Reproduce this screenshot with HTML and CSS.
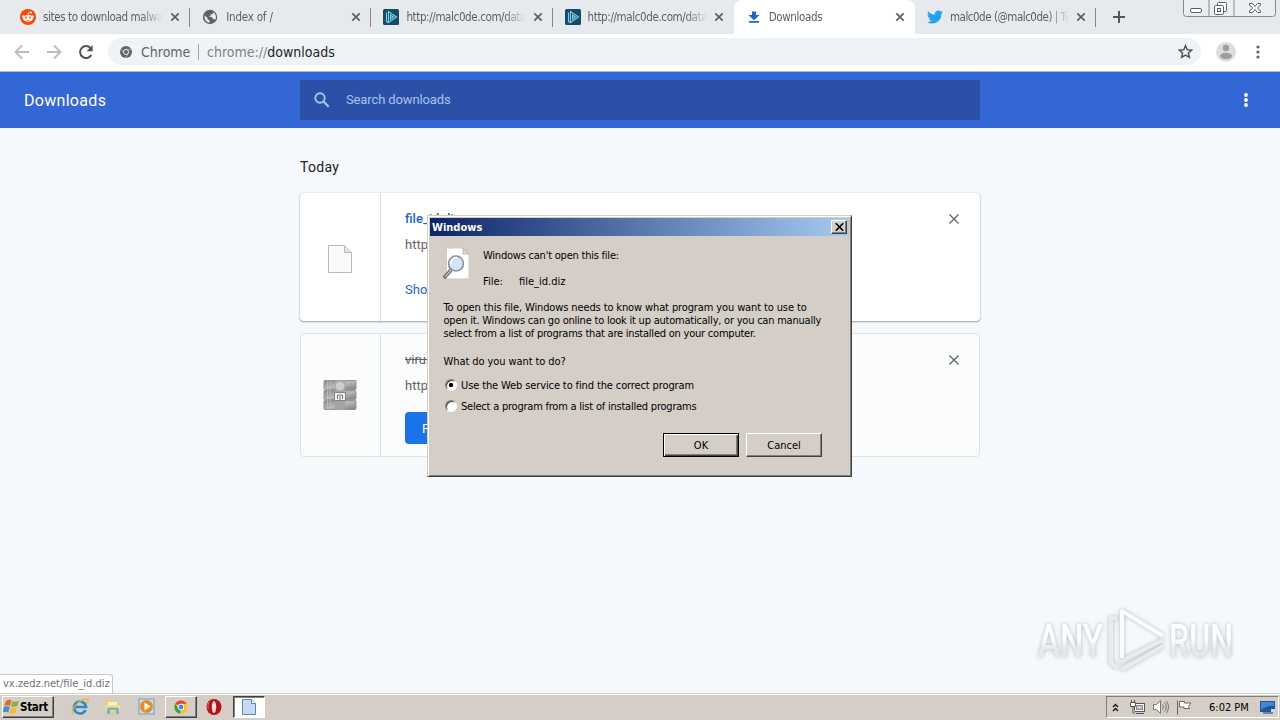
FILE: index.html
```
<!DOCTYPE html>
<html lang="en">
<head>
    <meta charset="UTF-8">
    <meta name="viewport" content="width=device-width, initial-scale=1.0">
    <title>Downloads</title>
    <link rel="stylesheet" href="styles.css">
</head>
<body>

<!-- Shared shapes -->
<svg class="defs" width="0" height="0">
    <defs>
        <symbol id="cross" viewBox="0 0 10 10"><path d="M1.300 1.300l7.400 7.400M8.700 1.300l-7.400 7.400" fill="none" stroke="currentColor" stroke-width="1.700"/></symbol>
        <symbol id="thin-cross" viewBox="0 0 12 12"><path d="M1.500 1.500l9 9M10.500 1.500l-9 9" fill="none" stroke="currentColor" stroke-width="1.300"/></symbol>
        <symbol id="malcode" viewBox="0 0 16 16">
            <rect width="16" height="16" rx="1.500" fill="#144b6b"/>
            <path d="M3.500 3.500v9l2 1.500M5.500 2.500v11l8-5.500zM7.500 6v4l3-2z" fill="none" stroke="#7fd0e8" stroke-width="1.100"/>
        </symbol>
    </defs>
</svg>

<!-- Tabs -->
<div class="tabs">
    <div class="tab">
        <svg class="favicon" viewBox="0 0 16 16"><circle cx="8" cy="8" r="8" fill="#ff4500"/><ellipse cx="8" cy="9.300" rx="5" ry="3.500" fill="#fff"/><circle cx="3.300" cy="7.500" r="1.300" fill="#fff"/><circle cx="12.700" cy="7.500" r="1.300" fill="#fff"/><circle cx="11" cy="3.500" r="1" fill="#fff"/><path d="M8 6l.7-2.800 2.300.4" fill="none" stroke="#fff" stroke-width=".7"/><circle cx="6" cy="8.500" r="1" fill="#ff4500"/><circle cx="10" cy="8.500" r="1" fill="#ff4500"/><path d="M6 11q2 1.200 4 0" fill="none" stroke="#ff4500" stroke-width=".7"/></svg>
        <span class="tab-title">sites to download malware</span>
        <svg class="tab-close"><use href="#cross"/></svg>
    </div>
    <div class="tab">
        <svg class="favicon" viewBox="0 0 16 16"><circle cx="8" cy="8" r="7.200" fill="#5f6368"/><path d="M2.300 6.500l3 2.200.5 1.800 1.700.8v2.400Q2.500 13 2.300 6.500zM8 2.200l3.500 1.100-.8 1.600-2 .5-.3 1.600-1.700.5 2.900.6 1.500 1.800 2.500.5Q15 6 11.500 3.300z" fill="#e7eaed"/></svg>
        <span class="tab-title loose">Index of /</span>
        <svg class="tab-close"><use href="#cross"/></svg>
    </div>
    <div class="tab">
        <svg class="favicon"><use href="#malcode"/></svg>
        <span class="tab-title">http://malc0de.com/database</span>
        <svg class="tab-close"><use href="#cross"/></svg>
    </div>
    <div class="tab before-active">
        <svg class="favicon"><use href="#malcode"/></svg>
        <span class="tab-title">http://malc0de.com/database</span>
        <svg class="tab-close"><use href="#cross"/></svg>
    </div>
    <div class="tab active">
        <svg class="favicon" viewBox="0 0 16 16"><path d="M6 2.500h4V6H13.500L8 11.300 2.500 6h3.500zM3 12h10v1.700H3z" fill="#1967d2"/></svg>
        <span class="tab-title">Downloads</span>
        <svg class="tab-close"><use href="#cross"/></svg>
    </div>
    <div class="tab">
        <svg class="favicon" viewBox="0 0 24 24"><path d="M24 4.600a10 10 0 0 1-2.800.8 5 5 0 0 0 2.200-2.700 10 10 0 0 1-3.100 1.200A4.900 4.900 0 0 0 11.900 8.400 14 14 0 0 1 1.700 3.200a4.900 4.900 0 0 0 1.500 6.500 5 5 0 0 1-2.200-.6 4.900 4.900 0 0 0 3.900 4.900 5 5 0 0 1-2.200.1 4.900 4.900 0 0 0 4.600 3.400A10 10 0 0 1 0 19.500a14 14 0 0 0 21.500-12.400A10 10 0 0 0 24 4.600z" fill="#1da1f2"/></svg>
        <span class="tab-title tight">malc0de (@malc0de) | Twitter</span>
        <svg class="tab-close"><use href="#cross"/></svg>
    </div>
    <svg class="new-tab" viewBox="0 0 12 12"><path d="M6 0v12M0 6h12" stroke="#50555a" stroke-width="2"/></svg>
    <svg class="window-buttons" viewBox="0 0 94 18">
        <path d="M.5 0v13.500q0 3 3 3h86q3 0 3-3V0M26 0v16M51 0v16" fill="#eceff1" stroke="#85898d"/>
        <g fill="#fff" stroke="#5b6065"><rect x="7.500" y="8.500" width="11" height="4" rx="1.500"/><rect x="34.500" y="2.500" width="9" height="9" rx="1"/><rect x="31.500" y="5.500" width="9" height="9" rx="1"/><rect x="34.500" y="8.500" width="3" height="3"/><path d="M66.500 3.500h3l2.500 3 2.500-3h3v1.500l-3 3 3 3v1.500h-3l-2.500-3-2.500 3h-3v-1.500l3-3-3-3z"/></g>
    </svg>
</div>

<!-- Address bar -->
<div class="toolbar">
    <svg class="nav-icon" viewBox="0 0 16 16"><path d="M15 8H2M8 1.500L1.500 8 8 14.500" fill="none" stroke="#babcbe" stroke-width="1.800"/></svg>
    <svg class="nav-icon" viewBox="0 0 16 16"><path d="M1 8h13M8 1.500L14.500 8 8 14.500" fill="none" stroke="#babcbe" stroke-width="1.800"/></svg>
    <svg class="nav-icon" viewBox="0 0 16 16"><path d="M13.300 11A6 6 0 1 1 12.500 4" fill="none" stroke="#50555a" stroke-width="2"/><path d="M14.700 1v6.200H8.500z" fill="#50555a"/></svg>
    <div class="omnibox">
        <svg class="chrome-mark" viewBox="0 0 12 12"><circle cx="6" cy="6" r="6" fill="#5f6368"/><circle cx="6" cy="6" r="2.500" fill="#5f6368" stroke="#f1f3f4"/><path d="M6 3.300h5.500M3.700 7.300L1 2.800M8.300 7.300L5.700 12" stroke="#c9cccf" stroke-width=".7"/></svg>
        <span class="origin">Chrome</span>
        <span class="divider"></span>
        <span class="url"><span class="scheme">chrome://</span><span class="host">downloads</span></span>
        <svg class="star" viewBox="0 0 16 16"><path d="M8 1.800l1.900 4.300 4.700.4-3.500 3.100 1 4.600L8 11.800l-4.100 2.400 1-4.600L1.400 6.500l4.700-.4z" fill="none" stroke="#50555a" stroke-width="1.600"/></svg>
    </div>
    <svg class="avatar" viewBox="0 0 20 20"><circle cx="10" cy="10" r="10" fill="#dcdddf"/><circle cx="10" cy="6" r="3.200" fill="#9c9ea1"/><ellipse cx="10" cy="14" rx="6" ry="3.200" fill="#9c9ea1"/></svg>
    <svg class="menu-dots" viewBox="0 0 4 14"><g fill="#5f6368"><circle cx="2" cy="2" r="1.600"/><circle cx="2" cy="7" r="1.600"/><circle cx="2" cy="12" r="1.600"/></g></svg>
</div>

<header class="page-header">
    <h1>Downloads</h1>
    <div class="search">
        <svg viewBox="0 0 16 16"><circle cx="6" cy="6" r="4.700" fill="none" stroke="#a9c2ef" stroke-width="1.900"/><path d="M9.500 9.500l5.200 5.200" stroke="#a9c2ef" stroke-width="2.200"/></svg>
        <span>Search downloads</span>
    </div>
    <svg class="menu-dots" viewBox="0 0 4 14"><g fill="#fff"><circle cx="2" cy="2" r="1.900"/><circle cx="2" cy="7" r="1.900"/><circle cx="2" cy="12" r="1.900"/></g></svg>
</header>

<main>
    <h2>Today</h2>
    <div class="card">
        <div class="file-icon">
            <svg width="26" height="30" viewBox="0 0 26 30"><path d="M1.500 1.500h16l7 7v20h-23z" fill="#fafafa" stroke="#b9b9b9"/><path d="M17.500 1.500v7h7" fill="#e4e4e4" stroke="#b9b9b9"/></svg>
        </div>
        <div class="details">
            <a class="file-name">file_id.diz</a>
            <span class="file-url">http://vx.zedz.net/file_id.diz</span>
            <a class="show">Show in folder</a>
        </div>
        <svg class="remove"><use href="#thin-cross"/></svg>
    </div>
    <div class="card muted">
        <div class="file-icon">
            <svg width="34" height="32" viewBox="0 0 34 32">
                <defs><linearGradient id="book" x2="1" y2="1"><stop stop-color="#888"/><stop offset=".5" stop-color="#b8b8b8"/><stop offset="1" stop-color="#7d7d7d"/></linearGradient></defs>
                <g fill="url(#book)" stroke="#959595"><rect x="1" y="1.500" width="32" height="9" rx="1"/><rect x="1" y="11.500" width="32" height="9" rx="1"/><rect x="1" y="21.500" width="32" height="9" rx="1"/></g>
                <path d="M4.500 2v28M7 2v28" stroke="#c4c4c4" stroke-width=".7"/><rect x="12" y="1" width="10" height="30" fill="#a4a4a4"/><circle cx="17" cy="7" r="4.500" fill="#ccc"/><rect x="11.500" y="13.500" width="11" height="8" fill="#f2f2f2" stroke="#858585"/><path d="M14.500 20v-4h5v4M17 17v4" fill="none" stroke="#777"/>
            </svg>
        </div>
        <div class="details">
            <span class="file-name removed">virus.zip</span>
            <span class="file-url">http://vx.zedz.net/virus.zip</span>
            <button class="retry">Retry</button>
        </div>
        <svg class="remove"><use href="#thin-cross"/></svg>
    </div>
</main>

<!-- Link status bubble -->
<div class="status">vx.zedz.net/file_id.diz</div>

<!-- Watermark -->
<svg class="watermark" viewBox="0 0 210 74">
    <defs><linearGradient id="fade" x2="0" y2="1"><stop offset=".45" stop-color="#fff"/><stop offset=".65" stop-color="#e6e8ea"/></linearGradient></defs>
    <g class="mark-text">
        <text x="6" y="53" textLength="65" lengthAdjust="spacingAndGlyphs">ANY</text>
        <text x="137" y="53" textLength="64" lengthAdjust="spacingAndGlyphs">RUN</text>
    </g>
    <g class="mark-logo"><path class="lower" d="M85 14h-6v45l7 5M88 58l43-22M89 66l42-24"/><path d="M90 54V7l41 25"/></g>
</svg>

<!-- File association dialog -->
<div class="dialog">
    <div class="titlebar">
        <span>Windows</span>
        <button class="dialog-close"><svg width="9" height="8" viewBox="0 0 9 8"><path d="M.8.300l7.400 7.400M8.200.300L.8 7.700" stroke="#000" stroke-width="1.600"/></svg></button>
    </div>
    <div class="dialog-body">
        <div class="summary">
            <svg width="30" height="34" viewBox="0 0 30 34"><path d="M4.500 1h16.500l6 6v25H4.500z" fill="#fff" stroke="#cfcac3"/><path d="M21 1v6h6z" fill="#d9d9d9" stroke="#aaa" stroke-width=".7"/><path d="M9 23l-7 8" stroke="#626568" stroke-width="3.500"/><path d="M9 23l-6 7" stroke="#c5c5c5" stroke-width="1.200"/><circle cx="14" cy="16.500" r="7.500" fill="#cfe5f8" stroke="#848b92" stroke-width="1.500"/><path d="M9 17q0-6 6-6.500" fill="none" stroke="#fff" stroke-width="1.800"/></svg>
            <div class="summary-text">
                <p class="tight">Windows can't open this file:</p>
                <p class="file-row"><span>File:</span><span>file_id.diz</span></p>
            </div>
        </div>
        <p class="explain"><span class="snug">To open this file, Windows needs to know what program you want to use to</span><br><span class="tight">open it. Windows can go online to look it up automatically, or you can manually</span><br><span class="tight">select from a list of programs that are installed on your computer.</span></p>
        <p class="question">What do you want to do?</p>
        <label class="choice snug"><i class="radio checked"></i>Use the Web service to find the correct program</label>
        <label class="choice tight"><i class="radio"></i>Select a program from a list of installed programs</label>
        <div class="buttons">
            <button class="default">OK</button>
            <button>Cancel</button>
        </div>
    </div>
</div>

<!-- Taskbar -->
<footer class="taskbar">
    <button class="start">
        <svg width="17" height="16" viewBox="0 0 17 16"><path d="M3 2q3-2 5.500-.5L7 7Q4 5.500 1.300 7z" fill="#e8662b"/><path d="M9.500 2q3 1.500 6.500-.5L14.300 7q-3 1.500-6.300.2z" fill="#82b640"/><path d="M1 8q3-1.500 5.700 0l-1.500 5.500Q2.500 12-.3 13.500z" fill="#3f8ed0"/><path d="M7.700 8.400q3 1.300 6.300-.2L12.500 14q-3 1.500-6.300-.2z" fill="#f6bd2f"/></svg>
        Start
    </button>
    <svg class="task-icon ie" viewBox="0 0 18 18"><path d="M14.500 12A6 6 0 1 1 15 9H4" fill="none" stroke="#2589d3" stroke-width="2.600"/><path d="M2 16Q-1 13 6 6T17 2Q18 4 15 6" fill="none" stroke="#e6b52e" stroke-width="1.300"/></svg>
    <svg class="task-icon explorer" viewBox="0 0 18 18"><path d="M2 2h5l1.500 2H15v11H2z" fill="#f1ce62"/><path d="M4 4h9v5H4z" fill="#fff4bd"/><path d="M1.500 7H16v6H1.500z" fill="#f8df86"/><path d="M3 16v-5q0-1.500 1.500-1.500h9q1.500 0 1.500 1.500v5h-3v-4H6v4z" fill="#69b7df"/></svg>
    <svg class="task-icon media" viewBox="0 0 18 18"><rect x="1" y="1" width="15" height="15" fill="#c5def0" stroke="#5da1d3"/><circle cx="8.500" cy="8.500" r="6.500" fill="#f28a14"/><path d="M6.500 4.500v8l6-4z" fill="#fff"/></svg>
    <div class="task-button">
        <svg width="14" height="14" viewBox="0 0 16 16"><circle cx="8" cy="8" r="7.500" fill="#f5c51c"/><path d="M8 8L1.500 4.300A7.500 7.500 0 0 1 14.500 4.300H8z" fill="#df4939"/><path d="M8 8l-1 7.500A7.500 7.500 0 0 1 1.500 4.300l3 5z" fill="#30a150"/><circle cx="8" cy="8" r="3.600" fill="#fff"/><circle cx="8" cy="8" r="2.800" fill="#4385ef"/></svg>
    </div>
    <svg class="task-icon opera" viewBox="0 0 18 18"><ellipse cx="9" cy="9" rx="7.500" ry="8" fill="#b5121b"/><ellipse cx="9" cy="9" rx="2.200" ry="6" fill="#f1dedb"/><path d="M4 4Q2.500 7 3 11" fill="none" stroke="#ec6a65"/></svg>
    <div class="task-button pressed">
        <svg width="14" height="16" viewBox="0 0 14 16"><path d="M.5.500h9l4 4v11H.500z" fill="#c5dcf4" stroke="#5b84b4"/><path d="M9.500.500v4h4" fill="#eef6ff" stroke="#5b84b4"/></svg>
    </div>
    <div class="tray">
        <svg class="chevrons" viewBox="0 0 7 9"><path d="M1 4l2.500-2.500L6 4M1 8l2.500-2.500L6 8" fill="none" stroke="#111" stroke-width="1.400"/></svg>
        <svg class="network" viewBox="0 0 17 16"><rect x="5.500" y="4.500" width="10" height="8" fill="#fff" stroke="#555"/><rect x="7.500" y="6.500" width="6" height="4" fill="#c8c8c8" stroke="#888"/><path d="M7 14.500h8" stroke="#555"/><path d="M1.500 3.500h5v4h-5zM2.500 1v3M5.500 1v3M4 7.500v6.500h2" fill="#fff" stroke="#555"/></svg>
        <svg class="speaker" viewBox="0 0 17 16"><path d="M1.500 5.500h3l4-4v13l-4-4h-3z" fill="#fff" stroke="#777"/><path d="M10.500 5.500q2 2.500 0 5M12.500 3.500q3.500 4.500 0 9M14.500 2q4 6 0 12" fill="none" stroke="#777"/></svg>
        <svg class="flag" viewBox="0 0 17 16"><path d="M1.500 1.500v14M3.500 2.500h5v1.500h6.500l-2.500 3.500 1 2h-5.500v-1.500H3.500z" fill="#fff" stroke="#666"/></svg>
        <span class="clock">6:02 PM</span>
        <svg class="desktop" viewBox="0 0 16 13"><rect width="15" height="11" fill="#1f559d"/><path d="M1 1h13v4Q8 4 1 9z" fill="#4587cf"/><path d="M3 12h10" stroke="#17375f"/><path d="M11 8h4v3h-4z" fill="#c8dcef"/></svg>
    </div>
</footer>

</body>
</html>
```
FILE: styles.css
```
* {
    box-sizing: border-box;
}

body {
    margin: 0;
    height: 720px;
    display: flex;
    flex-direction: column;
    overflow: hidden;
    background-color: #f6f9fc;
    font-family: "DejaVu Sans Condensed", "DejaVu Sans", sans-serif;
    font-size: 11px;
    color: #000;
}

.defs {
    position: absolute;
}

svg {
    display: block;
    flex: none;
}

h1, h2, p {
    margin: 0;
    font-weight: normal;
}

button {
    font: inherit;
    padding: 0;
}

/* Tabs */
.tabs {
    height: 34px;
    flex: none;
    display: flex;
    padding-left: 9px;
    background-color: #e7eaed;
}

.tab {
    width: 181.2px;
    flex: none;
    display: flex;
    align-items: center;
    padding: 0 10px 0 11px;
    position: relative;
    color: #5b5f64;
}

.tab + .tab {
    padding-left: 12px;
}

.tab::after {
    content: "";
    position: absolute;
    right: 0;
    top: 8px;
    width: 1px;
    height: 19px;
    background-color: #85898d;
}

.tab.active::after,
.tab.before-active::after {
    display: none;
}

.tab.active {
    background-color: #fff;
    border-radius: 8px 8px 0 0;
}

.favicon {
    width: 16px;
    height: 16px;
    margin-right: 5px;
}

.tab-title {
    flex: 1;
    margin-right: 8px;
    padding-left: 2px;
    overflow: hidden;
    white-space: nowrap;
    font-size: 11.5px;
    letter-spacing: -0.38px;
    -webkit-mask-image: linear-gradient(to right, #000 100px, transparent 122px);
    mask-image: linear-gradient(to right, #000 100px, transparent 122px);
}

.tab-title.loose {
    padding-left: 3px;
    letter-spacing: -0.2px;
}

.tab-title.tight {
    letter-spacing: -0.48px;
}

.tab-close {
    width: 10px;
    height: 10px;
    color: #5b5f64;
}

.new-tab {
    width: 12px;
    height: 12px;
    margin: 11px 0 0 17px;
}

.window-buttons {
    width: 94px;
    height: 18px;
    margin-left: auto;
    margin-right: 3px;
}

/* Address bar */
.toolbar {
    height: 38px;
    flex: none;
    display: flex;
    align-items: center;
    padding: 0 20px 2px 14px;
    background-color: #fff;
    border-bottom: 1px solid #a9bce0;
}

.nav-icon {
    width: 16px;
    height: 16px;
    margin-right: 16px;
}

.omnibox {
    width: 1093px;
    height: 27px;
    margin-left: -2px;
    display: flex;
    align-items: center;
    padding: 0 8px 0 12px;
    border-radius: 14px;
    background-color: #f0f3f5;
    font-size: 14px;
    color: #5f6368;
}

.chrome-mark {
    width: 12px;
    height: 12px;
    margin-right: 9px;
}

.origin {
    width: 50px;
}

.divider {
    width: 1px;
    height: 16px;
    margin: 0 8px 0 7px;
    background-color: #a0a4a8;
}

.scheme {
    color: #7e8285;
}

.host {
    color: #202124;
}

.star {
    width: 15px;
    height: 15px;
    margin-left: auto;
}

.avatar {
    width: 20px;
    height: 20px;
    margin-left: 15px;
}

.menu-dots {
    width: 4px;
    height: 14px;
    margin-left: auto;
}

/* Page header */
.page-header {
    height: 56px;
    flex: none;
    display: flex;
    align-items: center;
    padding: 0 32px 0 24px;
    background-color: #3367d6;
    color: #fff;
    font-family: Roboto, sans-serif;
}

.page-header h1 {
    width: 276px;
    font-size: 16px;
    letter-spacing: 0.3px;
}

.search {
    width: 680px;
    height: 40px;
    display: flex;
    align-items: center;
    gap: 16px;
    padding-left: 14px;
    background-color: #2a50a7;
    color: #a9c2ef;
    font-size: 13px;
    letter-spacing: -0.12px;
}

.search span {
    padding-bottom: 2px;
}

.search svg {
    width: 16px;
    height: 16px;
}

/* Downloads list */
main {
    width: 680px;
    flex: 1;
    margin: 0 auto;
    font-family: Roboto, sans-serif;
}

main h2 {
    margin: 29px 0 15px;
    font-size: 14px;
    line-height: 21px;
    letter-spacing: 0.3px;
    color: #202124;
}

.card {
    height: 128px;
    display: flex;
    margin-bottom: 12px;
    border-radius: 4px;
    background-color: #fff;
    box-shadow: 0 1px 2px rgba(60, 64, 67, 0.45), 0 0 1px rgba(60, 64, 67, 0.4);
}

.card.muted {
    height: 124px;
    border: 1px solid #dee2e5;
    background-color: #fbfdfd;
    box-shadow: none;
}

.file-icon {
    width: 81px;
    display: flex;
    align-items: center;
    justify-content: center;
    padding-top: 4px;
    border-right: 1px solid #dcdfe2;
}

.muted .file-icon {
    width: 80px;
    padding: 0 1px 0 0;
}

.details {
    flex: 1;
    display: flex;
    flex-direction: column;
    align-items: flex-start;
    padding: 16px 24px;
    font-size: 13px;
    line-height: 19px;
}

.file-name {
    font-weight: 500;
    color: #1a68cd;
}

.file-name.removed {
    font-weight: normal;
    color: #5f6368;
    text-decoration: line-through;
}

.file-url {
    margin-top: 7px;
    color: #5f6368;
}

.show {
    margin-top: 26px;
    color: #1a68cd;
}

.retry {
    width: 64px;
    height: 32px;
    flex: none;
    margin-top: 17px;
    border: none;
    border-radius: 4px;
    background-color: #1a73e8;
    color: #fff;
}

.remove {
    width: 12px;
    height: 12px;
    margin: 20px 20px 0 0;
    color: #5f6368;
}

.muted .remove {
    margin-right: 19px;
}

/* Link status bubble */
.status {
    position: absolute;
    left: 0;
    top: 674px;
    width: 113px;
    height: 19px;
    padding-left: 3px;
    border: 1px solid #c6c9cc;
    border-left: none;
    border-bottom: none;
    border-radius: 0 3px 0 0;
    background-color: #fff;
    line-height: 17px;
    color: #6d7175;
    white-space: nowrap;
}

/* Watermark */
.watermark {
    position: absolute;
    left: 1032px;
    top: 604px;
    width: 210px;
    height: 74px;
    filter: drop-shadow(0 0 2px rgba(70, 80, 90, 0.38));
}

.mark-text {
    font-family: Roboto, sans-serif;
    font-size: 46px;
    font-weight: 500;
    fill: url(#fade);
}

.mark-logo path {
    fill: none;
    stroke: #fbfcfc;
    stroke-width: 4;
    stroke-linejoin: round;
}

.mark-logo .lower {
    stroke: #e9ebed;
}

/* Dialog */
.dialog {
    position: absolute;
    left: 427px;
    top: 215px;
    width: 425px;
    height: 262px;
    padding: 1px;
    border: 1px solid #d4d0c8;
    border-right-color: #404040;
    border-bottom-color: #404040;
    background-color: #d4cec7;
    box-shadow: inset 1px 1px #fff, inset -1px -1px #808080;
}

.snug {
    letter-spacing: -0.12px;
}

.tight {
    letter-spacing: -0.22px;
}

.titlebar {
    height: 18px;
    margin: 1px 1px 0;
    display: flex;
    align-items: center;
    justify-content: space-between;
    padding: 0 2px 0 2px;
    background: linear-gradient(to right, #0c2569, #a6caf0);
    color: #fff;
    font-weight: bold;
}

.dialog-close {
    width: 16px;
    height: 14px;
    display: flex;
    align-items: center;
    justify-content: center;
    border: 1px solid #fff;
    border-right-color: #404040;
    border-bottom-color: #404040;
    background-color: #d4cec7;
    box-shadow: inset -1px -1px #808080;
}

.dialog-body {
    padding: 11px 28px 0 14px;
    line-height: 13px;
}

.summary {
    display: flex;
    gap: 11px;
    margin-left: -1px;
}

.summary-text {
    padding-top: 2px;
}

.file-row {
    display: flex;
    margin-top: 13px;
}

.file-row span:first-child {
    width: 36px;
}

.explain {
    margin-top: 13px;
    padding-left: 0.5px;
    white-space: nowrap;
}

.question {
    margin: 15px 0 11px;
    padding-left: 0.5px;
    letter-spacing: -0.08px;
}

.choice {
    display: flex;
    align-items: center;
    margin-bottom: 8px;
    padding-left: 2px;
}

.radio {
    width: 12px;
    height: 12px;
    margin: -2px 4px 0 0;
    border: 1px solid #808080;
    border-right-color: #fff;
    border-bottom-color: #fff;
    border-radius: 50%;
    background-color: #fff;
    box-shadow: inset 1px 1px #404040;
}

.radio.checked {
    background-image: radial-gradient(circle, #000 1.8px, #fff 2.6px);
}

.buttons {
    display: flex;
    justify-content: flex-end;
    gap: 7px;
    margin-top: 20px;
}

.buttons button {
    width: 76px;
    height: 24px;
    border: 1px solid #fff;
    border-right-color: #404040;
    border-bottom-color: #404040;
    background-color: #d4cec7;
    box-shadow: inset -1px -1px #808080;
}

.buttons .default {
    border-color: #000;
    box-shadow: inset 1px 1px #fff, inset -1px -1px #404040, inset -2px -2px #808080;
}

/* Taskbar */
.taskbar {
    height: 27px;
    flex: none;
    display: flex;
    align-items: center;
    padding: 2px 1px 2px 2px;
    border-top: 1px solid #d4cec7;
    background-color: #d4cec7;
    box-shadow: inset 0 1px #fff;
}

.start {
    width: 52px;
    height: 22px;
    display: flex;
    align-items: center;
    gap: 0;
    border: 1px solid #fff;
    border-right-color: #404040;
    border-bottom-color: #404040;
    background-color: #d4cec7;
    box-shadow: inset -1px -1px #808080;
    font-weight: bold;
    font-size: 11.5px;
    letter-spacing: -0.3px;
}

.task-icon {
    width: 18px;
    height: 18px;
}

.ie {
    margin-left: 17px;
}

.explorer {
    margin-left: 15px;
}

.media {
    margin-left: 16px;
}

.opera {
    margin-left: 8px;
}

.task-button {
    width: 32px;
    height: 22px;
    display: flex;
    align-items: center;
    justify-content: center;
    margin-left: 9px;
    border: 1px solid #fff;
    border-right-color: #404040;
    border-bottom-color: #404040;
    box-shadow: inset -1px -1px #808080;
}

.task-button.pressed {
    margin-left: 10px;
    border-color: #404040 #fff #fff #404040;
    background-color: #fff;
    box-shadow: inset 1px 1px #808080;
}

.tray {
    width: 173px;
    height: 22px;
    display: flex;
    align-items: center;
    margin-left: auto;
    padding-left: 5px;
    border: 1px solid #808080;
    border-right-color: #fff;
    border-bottom-color: #fff;
}

.chevrons {
    width: 7px;
    height: 9px;
    margin-right: 10px;
}

.network,
.speaker,
.flag {
    width: 17px;
    height: 16px;
    margin-right: 7px;
}

.speaker {
    margin-left: -1px;
}

.clock {
    width: 43px;
    margin-left: 9px;
    white-space: nowrap;
}

.desktop {
    width: 16px;
    height: 13px;
    margin-left: 8px;
}
```
